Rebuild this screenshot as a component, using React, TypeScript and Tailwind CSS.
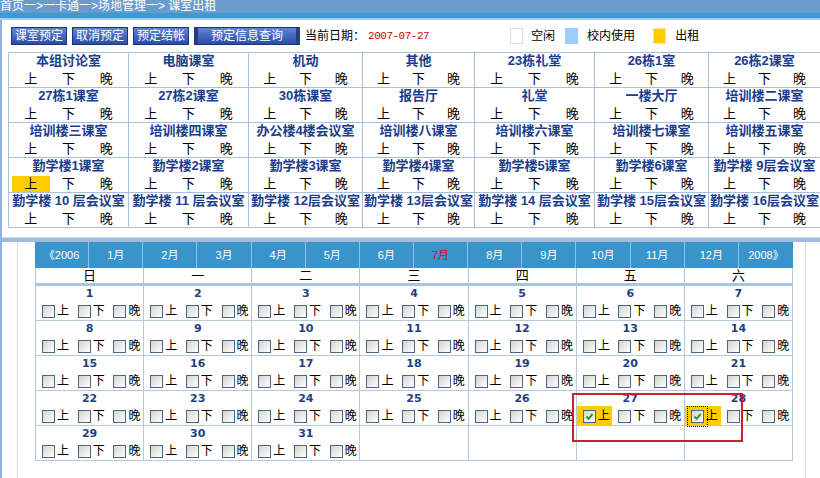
import React from 'react'

const rooms = [
  ['本组讨论室', '电脑课室', '机动', '其他', '23栋礼堂', '26栋1室', '26栋2课室'],
  ['27栋1课室', '27栋2课室', '30栋课室', '报告厅', '礼堂', '一楼大厅', '培训楼二课室'],
  ['培训楼三课室', '培训楼四课室', '办公楼4楼会议室', '培训楼八课室', '培训楼六课室', '培训楼七课室', '培训楼五课室'],
  ['勤学楼1课室', '勤学楼2课室', '勤学楼3课室', '勤学楼4课室', '勤学楼5课室', '勤学楼6课室', '勤学楼 9层会议室'],
  ['勤学楼 10 层会议室', '勤学楼 11 层会议室', '勤学楼 12层会议室', '勤学楼 13层会议室', '勤学楼 14 层会议室', '勤学楼 15层会议室', '勤学楼 16层会议室'],
]

const months = ['《2006', '1月', '2月', '3月', '4月', '5月', '6月', '7月', '8月', '9月', '10月', '11月', '12月', '2008》']
const weekdays = ['日', '一', '二', '三', '四', '五', '六']
const slots = ['上', '下', '晚']

function Box({ checked, focus }: { checked?: boolean; focus?: boolean }) {
  return (
    <span
      className={
        'relative inline-block w-[13px] h-[13px] shrink-0 border border-[#4a6585] bg-linear-to-br from-[#d4d4ce] to-white ' +
        (focus ? 'outline outline-1 outline-dotted outline-black outline-offset-[3px]' : '')
      }
    >
      {checked && (
        <svg className="absolute left-0 top-0" width="11" height="11" viewBox="0 0 11 11">
          <path d="M2.5 5.5 L4.6 7.8 L8.6 3" stroke="#21a121" strokeWidth="2" fill="none" />
        </svg>
      )}
    </span>
  )
}

function RoomCell({ name, rented }: { name: string; rented?: boolean }) {
  return (
    <div className="h-[35px] border-r border-b border-[#a7c0dd]">
      <div className="h-[16px] leading-[16px] text-center text-[13px] font-bold text-[#1a3d8c] whitespace-nowrap">
        {name}
      </div>
      <div className="grid grid-cols-3 px-[3px] h-[19px] items-center">
        {slots.map((s, i) => (
          <div
            key={s}
            className={
              'h-[16px] leading-[16px] text-center text-[13px] text-black ' +
              (rented && i === 0 ? 'bg-[#ffcc00]' : '')
            }
          >
            {s}
          </div>
        ))}
      </div>
    </div>
  )
}

function DayCell({ day }: { day?: number }) {
  const picked = day === 27 || day === 28
  return (
    <div className="h-[35px] border-r border-b border-[#b7c8dc]">
      {day && (
        <>
          <div className="h-[15px] leading-[15px] text-center text-[11px] font-bold text-[#1f3f80] font-[family-name:'DejaVu_Sans',sans-serif]">
            {day}
          </div>
          <div className="flex h-[20px]">
            {slots.map((s, i) => (
              <div
                key={s}
                className={
                  'w-[36px] h-[20px] flex items-center pl-[6px] ' +
                  (picked && i === 0 ? 'bg-[#ffcc00]' : '')
                }
              >
                <Box checked={picked && i === 0} focus={day === 28 && i === 0} />
                <span className="ml-[2px] text-[12px] leading-[14px] text-black">{s}</span>
              </div>
            ))}
          </div>
        </>
      )}
    </div>
  )
}

function Btn({ children, wide }: { children: React.ReactNode; wide?: boolean }) {
  return (
    <button
      className={
        'h-[18px] leading-[16px] text-[12px] text-white border border-[#1a3380] bg-linear-to-b from-[#5f84d6] to-[#2b4ca6] ' +
        (wide ? 'px-[13px] border-x-[4px] border-x-[#22407f]' : 'px-[3px]')
      }
    >
      {children}
    </button>
  )
}

export default function App() {
  const weeks: (number | undefined)[][] = []
  for (let w = 0; w < 5; w++) {
    const row: (number | undefined)[] = []
    for (let d = 0; d < 7; d++) {
      const n = w * 7 + d + 1
      row.push(n <= 31 ? n : undefined)
    }
    weeks.push(row)
  }

  return (
    <div className="relative w-[820px] h-[478px] overflow-hidden bg-white font-[family-name:'Liberation_Sans','Noto_Sans_CJK_SC',sans-serif]">
      <div className="h-[13px] bg-[#6a9bcd] text-white text-[12px] leading-[13px] whitespace-nowrap">
        首页一&gt;一卡通一&gt;场地管理一&gt; 课室出租
      </div>
      <div className="h-[5px] bg-[#3b9ad2]" />
      <div className="h-[2px] bg-[#a9cfe9]" />

      <div className="flex h-[458px]">
        <div className="w-[2px] bg-[#8db3dc]" />
        <div className="flex-1 flex flex-col min-w-0">
          {/* upper: buttons + rooms */}
          <div className="h-[217px] pt-[7px]">
            <div className="flex items-center h-[18px] pl-[9px] gap-[5px] whitespace-nowrap">
              <Btn>课室预定</Btn>
              <Btn>取消预定</Btn>
              <Btn>预定结帐</Btn>
              <Btn wide>预定信息查询</Btn>
              <span className="text-[12px] text-black">当前日期：</span>
              <span className="text-[11px] tracking-[-0.5px] text-[#cc0000] font-[family-name:'Liberation_Mono',monospace] -ml-[2px]">2007-07-27</span>
              <span className="ml-[76px] w-[13px] h-[16px] border border-[#dcdcdc] bg-white" />
              <span className="ml-[3px] text-[12px] text-black">空闲</span>
              <span className="ml-[5px] w-[13px] h-[16px] bg-[#99ccff]" />
              <span className="ml-[4px] text-[12px] text-black">校内使用</span>
              <span className="ml-[13px] w-[13px] h-[16px] border border-[#f3e3a0] bg-[#ffcc00]" />
              <span className="ml-[4px] text-[12px] text-black">出租</span>
            </div>
            <div className="mt-[7px] ml-[6px] w-max grid grid-cols-[120px_120px_114px_112px_120px_114px_112px] border-l border-t border-[#a7c0dd]">
              {rooms.map((row, r) =>
                row.map((name, c) => <RoomCell key={r + '-' + c} name={name} rented={r === 3 && c === 0} />)
              )}
            </div>
          </div>

          <div className="h-[1px] bg-[#c9dbee]" />
          <div className="h-[4px] bg-[#a0bde0]" />

          {/* lower: calendar */}
          <div className="flex-1 flex">
            <div className="w-[15px]" />
            <div className="w-px bg-[#d3dbe4]" />
            <div className="w-[17px]" />
            <div className="w-[758px]">
              <div className="grid grid-cols-[repeat(14,minmax(0,1fr))] h-[26px] bg-[#3a94cc]">
                {months.map((m, i) => (
                  <div
                    key={m}
                    className={
                      'leading-[26px] text-center text-[11px] ' +
                      (i === 7 ? 'text-[#d4101e] ' : 'text-white ') +
                      (i < 13 ? 'border-r border-[#8cc2e8]' : '')
                    }
                  >
                    {m}
                  </div>
                ))}
              </div>
              <div className="grid grid-cols-7 border-l border-[#b7c8dc]">
                {weekdays.map((d) => (
                  <div
                    key={d}
                    className="h-[18px] leading-[15px] text-center text-[13px] text-black border-r border-b-[3px] border-r-[#b7c8dc] border-b-[#a9c4e2]"
                  >
                    {d}
                  </div>
                ))}
                {weeks.map((row, w) => row.map((d, i) => <DayCell key={w + '-' + i} day={d} />))}
              </div>
            </div>
            <div className="w-[12px]" />
            <div className="w-px bg-[#d3dbe4]" />
          </div>
        </div>
      </div>

      <div className="absolute left-[572px] top-[393px] w-[171px] h-[49px] border-2 border-[#c8202c]" />
    </div>
  )
}
